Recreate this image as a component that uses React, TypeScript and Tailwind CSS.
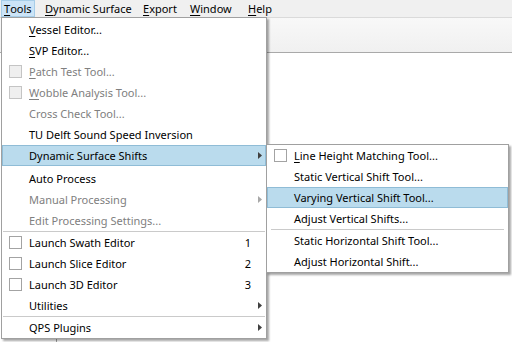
import React from "react";

type Item =
  | { sep: true }
  | {
      sep?: false;
      label: string;
      u?: number;
      disabled?: boolean;
      check?: boolean;
      shortcut?: string;
      sub?: boolean;
      active?: boolean;
      h?: string;
    };

const toolsMenu: Item[] = [
  { label: "Vessel Editor...", u: 0 },
  { label: "SVP Editor...", u: 0 },
  { label: "Patch Test Tool...", u: 0, disabled: true, check: true },
  { label: "Wobble Analysis Tool...", u: 0, disabled: true, check: true },
  { label: "Cross Check Tool...", disabled: true },
  { label: "TU Delft Sound Speed Inversion" },
  { label: "Dynamic Surface Shifts", sub: true, active: true, h: "h-[23px] pb-[2px]" },
  { label: "Auto Process" },
  { label: "Manual Processing", disabled: true, sub: true },
  { label: "Edit Processing Settings...", disabled: true },
  { sep: true },
  { label: "Launch Swath Editor", check: true, shortcut: "1" },
  { label: "Launch Slice Editor", check: true, shortcut: "2" },
  { label: "Launch 3D Editor", check: true, shortcut: "3" },
  { label: "Utilities", sub: true },
  { sep: true },
  { label: "QPS Plugins", sub: true, h: "h-[20px]" },
];

const shiftsMenu: Item[] = [
  { label: "Line Height Matching Tool...", u: 0, check: true },
  { label: "Static Vertical Shift Tool..." },
  { label: "Varying Vertical Shift Tool...", active: true },
  { label: "Adjust Vertical Shifts..." },
  { sep: true },
  { label: "Static Horizontal Shift Tool..." },
  { label: "Adjust Horizontal Shift..." },
];

function Label({ text, u }: { text: string; u?: number }) {
  if (u === undefined) return <>{text}</>;
  return (
    <>
      {text.slice(0, u)}
      <span className="underline underline-offset-[2px] decoration-1">{text[u]}</span>
      {text.slice(u + 1)}
    </>
  );
}

function Arrow({ disabled }: { disabled?: boolean }) {
  return (
    <svg width="4" height="7" viewBox="0 0 4 7">
      <path d="M0 0 L4 3.5 L0 7 Z" fill={disabled ? "#a8a8a8" : "#404040"} />
    </svg>
  );
}

function Menu({ items, sepInset }: { items: Item[]; sepInset: string }) {
  return (
    <div className="flex flex-col">
      {items.map((it, i) => {
        if (it.sep) {
          return <div key={i} className={`h-px bg-[#cacaca] ${sepInset}`} />;
        }
        return (
          <div key={i} className={`${it.h ?? "h-[21px]"} flex`}>
            <div
              className={`flex flex-1 items-center border ${
                it.active ? "border-[#8fbcd6] bg-[#badbed]" : "border-transparent"
              } ${it.disabled ? "text-[#808080]" : "text-black"}`}
            >
              <div className="flex w-[26px] shrink-0 items-center pl-[6px]">
                {it.check && (
                  <span
                    className={`block h-[13px] w-[13px] border ${
                      it.disabled ? "border-[#c4c4c4] bg-[#efefef]" : "border-[#a3a3a3] bg-white"
                    }`}
                  />
                )}
              </div>
              <span className="flex-1 whitespace-nowrap">
                <Label text={it.label} u={it.u} />
              </span>
              {it.shortcut && <span className="pr-[2px]">{it.shortcut}</span>}
              <span className="flex w-[12px] shrink-0 justify-end pr-[3px]">
                {it.sub && <Arrow disabled={it.disabled} />}
              </span>
            </div>
          </div>
        );
      })}
    </div>
  );
}

export default function App() {
  return (
    <div
      className="relative flex h-[342px] w-[512px] flex-col overflow-hidden bg-white text-[11px] leading-none"
      style={{ fontFamily: '"Segoe UI", "Noto Sans", sans-serif' }}
    >
      <div className="flex h-[17px] items-stretch bg-[#f0f0f0] text-black">
        <div className="ml-px flex w-[34px] shrink-0 items-center border border-[#a6cde8] bg-[#cce4f7] pl-[2px]">
          <Label text="Tools" u={0} />
        </div>
        <div className="ml-[10px] flex w-[98px] shrink-0 items-center">
          <Label text="Dynamic Surface" u={0} />
        </div>
        <div className="flex w-[47px] shrink-0 items-center">
          <Label text="Export" u={0} />
        </div>
        <div className="flex w-[58px] shrink-0 items-center">
          <Label text="Window" u={0} />
        </div>
        <div className="flex items-center">
          <Label text="Help" u={0} />
        </div>
      </div>
      <div className="h-[36px] border-t border-b border-t-[#dadada] border-b-[#a9a9a9] bg-gradient-to-b from-[#f8f8f8] to-[#f0f0f0]" />
      <div className="flex flex-1">
        <div className="w-[57px] border-r border-[#a0a0a0]" />
        <div className="flex-1" />
      </div>

      <div className="absolute left-px top-[17px] w-[266px] border border-[#a0a0a0] bg-white py-px shadow-[2px_2px_2px_rgba(0,0,0,0.35)]">
        <Menu items={toolsMenu} sepInset="mx-px" />
      </div>

      <div className="absolute left-[266px] top-[144px] w-[243px] border border-[#a0a0a0] bg-white shadow-[2px_2px_2px_rgba(0,0,0,0.35)]">
        <Menu items={shiftsMenu} sepInset="ml-[4px] mr-[4px]" />
      </div>
    </div>
  );
}
